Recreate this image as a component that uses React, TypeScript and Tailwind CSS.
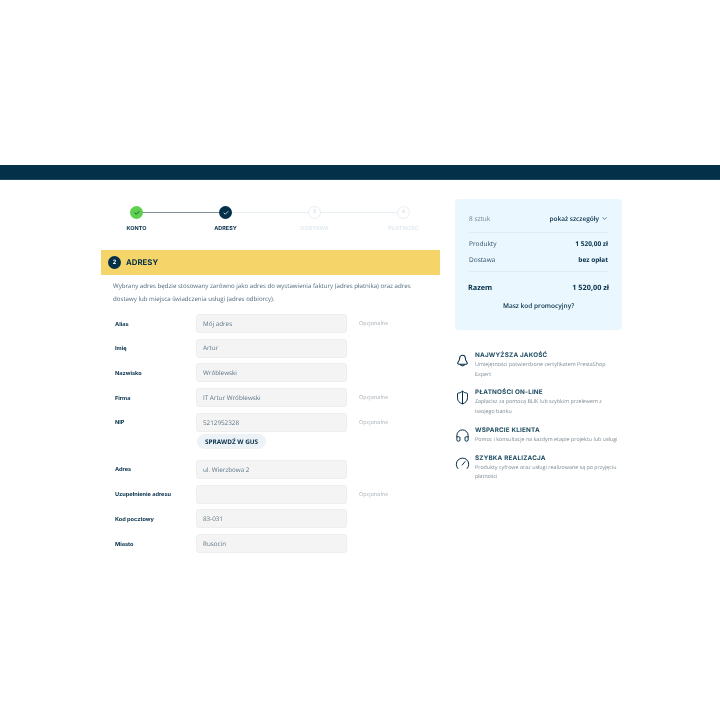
import { Check, ChevronDown, Headphones, ShieldHalf } from 'lucide-react';

const navy = '#05304a';

const steps = [
  { label: 'KONTO', state: 'done' },
  { label: 'ADRESY', state: 'current' },
  { label: 'DOSTAWA', state: 'todo', num: 3 },
  { label: 'PŁATNOŚĆ', state: 'todo', num: 4 },
];

const fields = [
  { label: 'Alias', value: 'Mój adres', optional: true },
  { label: 'Imię', value: 'Artur' },
  { label: 'Nazwisko', value: 'Wróblewski' },
  { label: 'Firma', value: 'IT Artur Wróblewski', optional: true },
  { label: 'NIP', value: '5212952328', optional: true, gus: true },
  { label: 'Adres', value: 'ul. Wierzbowa 2' },
  { label: 'Uzupełnienie adresu', value: '', optional: true },
  { label: 'Kod pocztowy', value: '83-031' },
  { label: 'Miasto', value: 'Rusocin' },
];

function BellIcon() {
  return (
    <svg width="15" height="15" viewBox="0 0 24 24" fill="none" stroke="#05304a" strokeWidth="1.7" strokeLinecap="round" strokeLinejoin="round">
      <path d="M7.500 8a4.500 4.500 0 0 1 9 0c0 3 .5 4.500 2.500 6.500 1.500 1.500.5 3.500-1.500 3.500h-11c-2 0-3-2-1.500-3.500C7 12.500 7.500 11 7.500 8z" />
      <path d="M9 18.500a2 2 0 0 0 2 2h2a2 2 0 0 0 2-2" />
    </svg>
  );
}

function GaugeIcon() {
  return (
    <svg width="15" height="15" viewBox="0 0 24 24" fill="none" stroke="#05304a" strokeWidth="1.6" strokeLinecap="round" strokeLinejoin="round">
      <path d="M4.500 20a10 10 0 1 1 15 0" />
      <path d="M11.500 14.500L16 9" />
    </svg>
  );
}

const perks = [
  {
    icon: <BellIcon />,
    title: 'NAJWYŻSZA JAKOŚĆ',
    text: 'Umiejętności potwierdzone certyfikatem PrestaShop Expert',
  },
  {
    icon: <ShieldHalf size={15} strokeWidth={1.6} color={navy} />,
    title: 'PŁATNOŚCI ON-LINE',
    text: 'Zapłacisz za pomocą BLIK lub szybkim przelewem z twojego banku',
  },
  {
    icon: <Headphones size={15} strokeWidth={1.6} color={navy} />,
    title: 'WSPARCIE KLIENTA',
    text: 'Pomoc i konsultacje na każdym etapie projektu lub usługi',
  },
  {
    icon: <GaugeIcon />,
    title: 'SZYBKA REALIZACJA',
    text: 'Produkty cyfrowe oraz usługi realizowane są po przyjęciu płatności',
  },
];

function Stepper() {
  return (
    <div className="-ml-[9px] flex h-[51px] w-[356px] pt-[7px]">
      {steps.map((step, i) => (
        <div key={step.label} className="relative flex w-[89px] flex-col items-center">
          {/* connector to the next step */}
          {i < steps.length - 1 && (
            <div className={`absolute left-1/2 top-[6px] h-px w-[89px] ${i === 0 ? 'bg-[#7d919e]' : 'bg-[#e8eff3]'}`} />
          )}
          {step.state === 'done' && (
            <div className="relative flex h-[13px] w-[13px] items-center justify-center rounded-full bg-[#5dd04d]">
              <Check size={6} strokeWidth={3} color={navy} />
            </div>
          )}
          {step.state === 'current' && (
            <div className="relative flex h-[13px] w-[13px] items-center justify-center rounded-full bg-[#05304a]">
              <Check size={6} strokeWidth={3} color="#ffffff" />
            </div>
          )}
          {step.state === 'todo' && (
            <div className="relative flex h-[13px] w-[13px] items-center justify-center rounded-full border border-[#e8eff3] bg-white text-[5px] font-bold text-[#d5dfe5]">
              {step.num}
            </div>
          )}
          <div className={`mt-[5.500px] whitespace-nowrap font-['Inter',sans-serif] text-[5.500px] font-bold leading-[8px] ${step.state === 'todo' ? 'text-[#e3ebf0]' : 'text-[#05304a]'}`}>
            {step.label}
          </div>
        </div>
      ))}
    </div>
  );
}

function FieldRow({ label, value, optional, gus }: { label: string; value: string; optional?: boolean; gus?: boolean }) {
  return (
    <div className="flex">
      <div className="w-[95px] pl-[14px] pt-[7.500px] font-['Inter',sans-serif] text-[5.600px] font-bold leading-[7px] text-[#05304a]">
        {label}
      </div>
      <div className="w-[151px]">
        <div className="flex h-[19px] items-center rounded-[3px] border border-[#eeeeee] bg-[#f4f4f4] pl-[6px] text-[6.300px] text-[#5f7685]">
          {value}
        </div>
        {gus && (
          <div className="mb-[5px] ml-px mt-[2.500px] flex h-[15px] w-[69px] items-center justify-center rounded-full bg-[#edf2f6] text-[6.400px] font-bold text-[#05304a]">
            SPRAWDŹ W GUS
          </div>
        )}
      </div>
      {optional && <div className="ml-[12px] pt-[5px] text-[5.500px] leading-[9px] text-[#a9b0b5]">Opcjonalne</div>}
    </div>
  );
}

export default function App() {
  return (
    <div className="min-h-[720px] bg-white font-['Open_Sans',sans-serif] [text-rendering:geometricPrecision] blur-[0.3px]">
      <div className="h-[165px]" />
      <div className="h-[15px] border-b border-[#1e4a63] bg-[#05304a]" />
      <div className="flex pl-[101px] pt-[19px]">
        <main className="w-[339px]">
          <Stepper />
          <div className="flex h-[25px] items-center gap-[5px] bg-[#f5d469] pl-[7px]">
            <div className="flex h-[13px] w-[13px] items-center justify-center rounded-full bg-[#05304a] text-[6px] font-bold text-white">2</div>
            <div className="font-['Inter',sans-serif] text-[7.800px] font-bold text-[#05304a]">ADRESY</div>
          </div>
          <p className="px-[12px] pt-[5px] text-[6.150px] leading-[12.500px] text-[#4f6a7b]">
            Wybrany adres będzie stosowany zarówno jako adres do wystawienia faktury (adres płatnika) oraz adres dostawy lub miejsca świadczenia usługi (adres odbiorcy).
          </p>
          <div className="mt-[9px] flex flex-col gap-[5.700px]">
            {fields.map((f) => (
              <FieldRow key={f.label} {...f} />
            ))}
          </div>
        </main>
        <aside className="ml-[15px] w-[167px]">
          <div className="h-[131px] rounded-[4px] bg-[#ebf7fe] px-[14px] pt-[14px] text-[6.500px] text-[#2c5166]">
            <div className="flex items-center justify-between border-b border-[#dfecf3] pb-[8px] leading-[11px]">
              <span className="text-[#6d8797]">8 sztuk</span>
              <span className="flex items-center gap-[2px] font-semibold text-[#05304a]">
                pokaż szczegóły <ChevronDown size={7} strokeWidth={2} />
              </span>
            </div>
            <div className="flex justify-between pt-[5px] leading-[11px]">
              <span>Produkty</span>
              <span className="font-bold text-[#05304a]">1 520,00 zł</span>
            </div>
            <div className="flex justify-between border-b border-[#dfecf3] pb-[6px] pt-[5px] leading-[11px]">
              <span>Dostawa</span>
              <span className="font-bold text-[#05304a]">bez opłat</span>
            </div>
            <div className="-mx-px flex justify-between pt-[10.500px] text-[7.300px] font-bold leading-[11px] text-[#05304a]">
              <span>Razem</span>
              <span>1 520,00 zł</span>
            </div>
            <div className="pt-[6.500px] text-center font-semibold leading-[11px] text-[#05304a]">Masz kod promocyjny?</div>
          </div>
          <div className="mt-[20px] flex flex-col gap-[8.200px]">
            {perks.map((p) => (
              <div key={p.title} className="flex">
                <div className="w-[20px] pt-[3px]">{p.icon}</div>
                <div className="w-[147px]">
                  <div className="font-['Inter',sans-serif] text-[6.300px] font-bold leading-[10px] tracking-[0.2px] text-[#1d4a61]">{p.title}</div>
                  <div className="text-[5.350px] leading-[9.600px] text-[#7d8a92]">{p.text}</div>
                </div>
              </div>
            ))}
          </div>
        </aside>
      </div>
    </div>
  );
}
